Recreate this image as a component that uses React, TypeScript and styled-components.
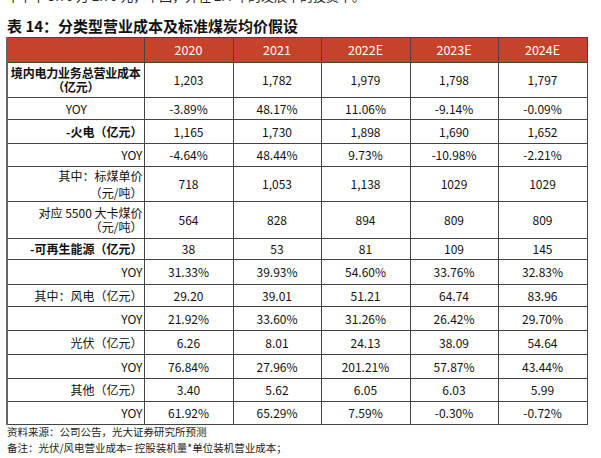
import React from "react";
import styled, { createGlobalStyle } from "styled-components";

const Global = createGlobalStyle`
  html, body { margin: 0; padding: 0; background: #fff; }
  body { font-family: "Noto Sans CJK SC", "Noto Sans", sans-serif; color: #111; }
`;

const Page = styled.div`
  width: 601px;
  height: 458px;
  overflow: hidden;
  padding-left: 6px;
  box-sizing: border-box;
`;

const TopLine = styled.div`
  margin-top: -12px;
  height: 15px;
  font-size: 13px;
  line-height: 15px;
  color: #222;
  white-space: nowrap;
`;

const Title = styled.h1`
  margin: 13px 0 1px 1px;
  font-size: 15px;
  line-height: 20px;
  font-weight: 700;
  color: #111;
`;

const Table = styled.table`
  border-collapse: collapse;
  table-layout: fixed;
  width: 580px;
  font-size: 12px;
  border-left: 2px solid #666;
`;

const Col = styled.col<{ $w: number }>`
  width: ${(p) => p.$w}px;
`;

const Row = styled.tr<{ $h: number }>`
  height: ${(p) => p.$h}px;
`;

const HeadCell = styled.th`
  background: #c4432a;
  color: #fff;
  font-weight: 400;
  font-size: 12.5px;
  border: 1px solid #444;
  padding: 0;
  text-align: center;
  line-height: 14px;
`;

const LabelCell = styled.td<{ $align: string; $bold?: boolean; $lh?: number; $tight?: boolean }>`
  border: 1px solid #444;
  padding: ${(p) => (p.$tight ? "0" : "0 1px 0 2px")};
  letter-spacing: ${(p) => (p.$tight ? "-0.2px" : "0")};
  white-space: nowrap;
  text-align: ${(p) => p.$align};
  font-weight: ${(p) => (p.$bold ? 700 : 400)};
  line-height: ${(p) => p.$lh ?? 14}px;
  vertical-align: middle;
  color: #111;
`;

const DataCell = styled.td`
  border: 1px solid #444;
  padding: 0;
  text-align: center;
  line-height: 14px;
  vertical-align: middle;
  color: #111;
`;

const Notes = styled.div`
  margin-top: -1px;
  font-size: 10.5px;
  line-height: 16px;
  color: #222;
  padding-left: 1px;
  white-space: nowrap;
`;

type RowData = {
  label: React.ReactNode;
  align: "center" | "right";
  bold?: boolean;
  tight?: boolean;
  lh?: number;
  h: number;
  values: string[];
};

const years = ["2020", "2021", "2022E", "2023E", "2024E"];
const widths = [137, 89, 88, 89, 88, 89];

const rows: RowData[] = [
  { label: <>境内电力业务总营业成本<br />（亿元）</>, align: "center", bold: true, tight: true, h: 35, values: ["1,203", "1,782", "1,979", "1,798", "1,797"] },
  { label: "YOY", align: "center", h: 22, values: ["-3.89%", "48.17%", "11.06%", "-9.14%", "-0.09%"] },
  { label: "-火电（亿元）", align: "right", bold: true, h: 24, values: ["1,165", "1,730", "1,898", "1,690", "1,652"] },
  { label: "YOY", align: "right", h: 23, values: ["-4.64%", "48.44%", "9.73%", "-10.98%", "-2.21%"] },
  { label: <>其中：标煤单价<br />（元/吨）</>, align: "right", lh: 17, h: 34, values: ["718", "1,053", "1,138", "1029", "1029"] },
  { label: <>对应 5500 大卡煤价<br />（元/吨）</>, align: "right", h: 37, values: ["564", "828", "894", "809", "809"] },
  { label: "-可再生能源（亿元）", align: "right", bold: true, h: 21, values: ["38", "53", "81", "109", "145"] },
  { label: "YOY", align: "right", h: 25, values: ["31.33%", "39.93%", "54.60%", "33.76%", "32.83%"] },
  { label: "其中：风电（亿元）", align: "right", h: 22, values: ["29.20", "39.01", "51.21", "64.74", "83.96"] },
  { label: "YOY", align: "right", h: 24, values: ["21.92%", "33.60%", "31.26%", "26.42%", "29.70%"] },
  { label: "光伏（亿元）", align: "right", h: 24, values: ["6.26", "8.01", "24.13", "38.09", "54.64"] },
  { label: "YOY", align: "right", h: 24, values: ["76.84%", "27.96%", "201.21%", "57.87%", "43.44%"] },
  { label: "其他（亿元）", align: "right", h: 23, values: ["3.40", "5.62", "6.05", "6.03", "5.99"] },
  { label: "YOY", align: "right", h: 23, values: ["61.92%", "65.29%", "7.59%", "-0.30%", "-0.72%"] },
];

export default function App() {
  return (
    <>
      <Global />
      <Page>
        <TopLine>年中中 5.70 万 2.70 元，中国，并在 2.4 年的发展中的投资中。</TopLine>
        <Title>表 14：分类型营业成本及标准煤炭均价假设</Title>
        <Table>
          <colgroup>
            {widths.map((w, i) => (
              <Col key={i} $w={w} />
            ))}
          </colgroup>
          <thead>
            <Row $h={25}>
              <HeadCell />
              {years.map((y) => (
                <HeadCell key={y}>{y}</HeadCell>
              ))}
            </Row>
          </thead>
          <tbody>
            {rows.map((r, i) => (
              <Row key={i} $h={r.h}>
                <LabelCell $align={r.align} $bold={r.bold} $lh={r.lh} $tight={r.tight}>
                  {r.label}
                </LabelCell>
                {r.values.map((v, j) => (
                  <DataCell key={j}>{v}</DataCell>
                ))}
              </Row>
            ))}
          </tbody>
        </Table>
        <Notes>
          <div>资料来源：公司公告，光大证券研究所预测</div>
          <div>备注：光伏/风电营业成本= 控股装机量*单位装机营业成本；</div>
          <div>火电营业成本=控股装机量*单位装机折旧成本+（供电煤耗*标煤单价）*上网电量</div>
        </Notes>
      </Page>
    </>
  );
}
